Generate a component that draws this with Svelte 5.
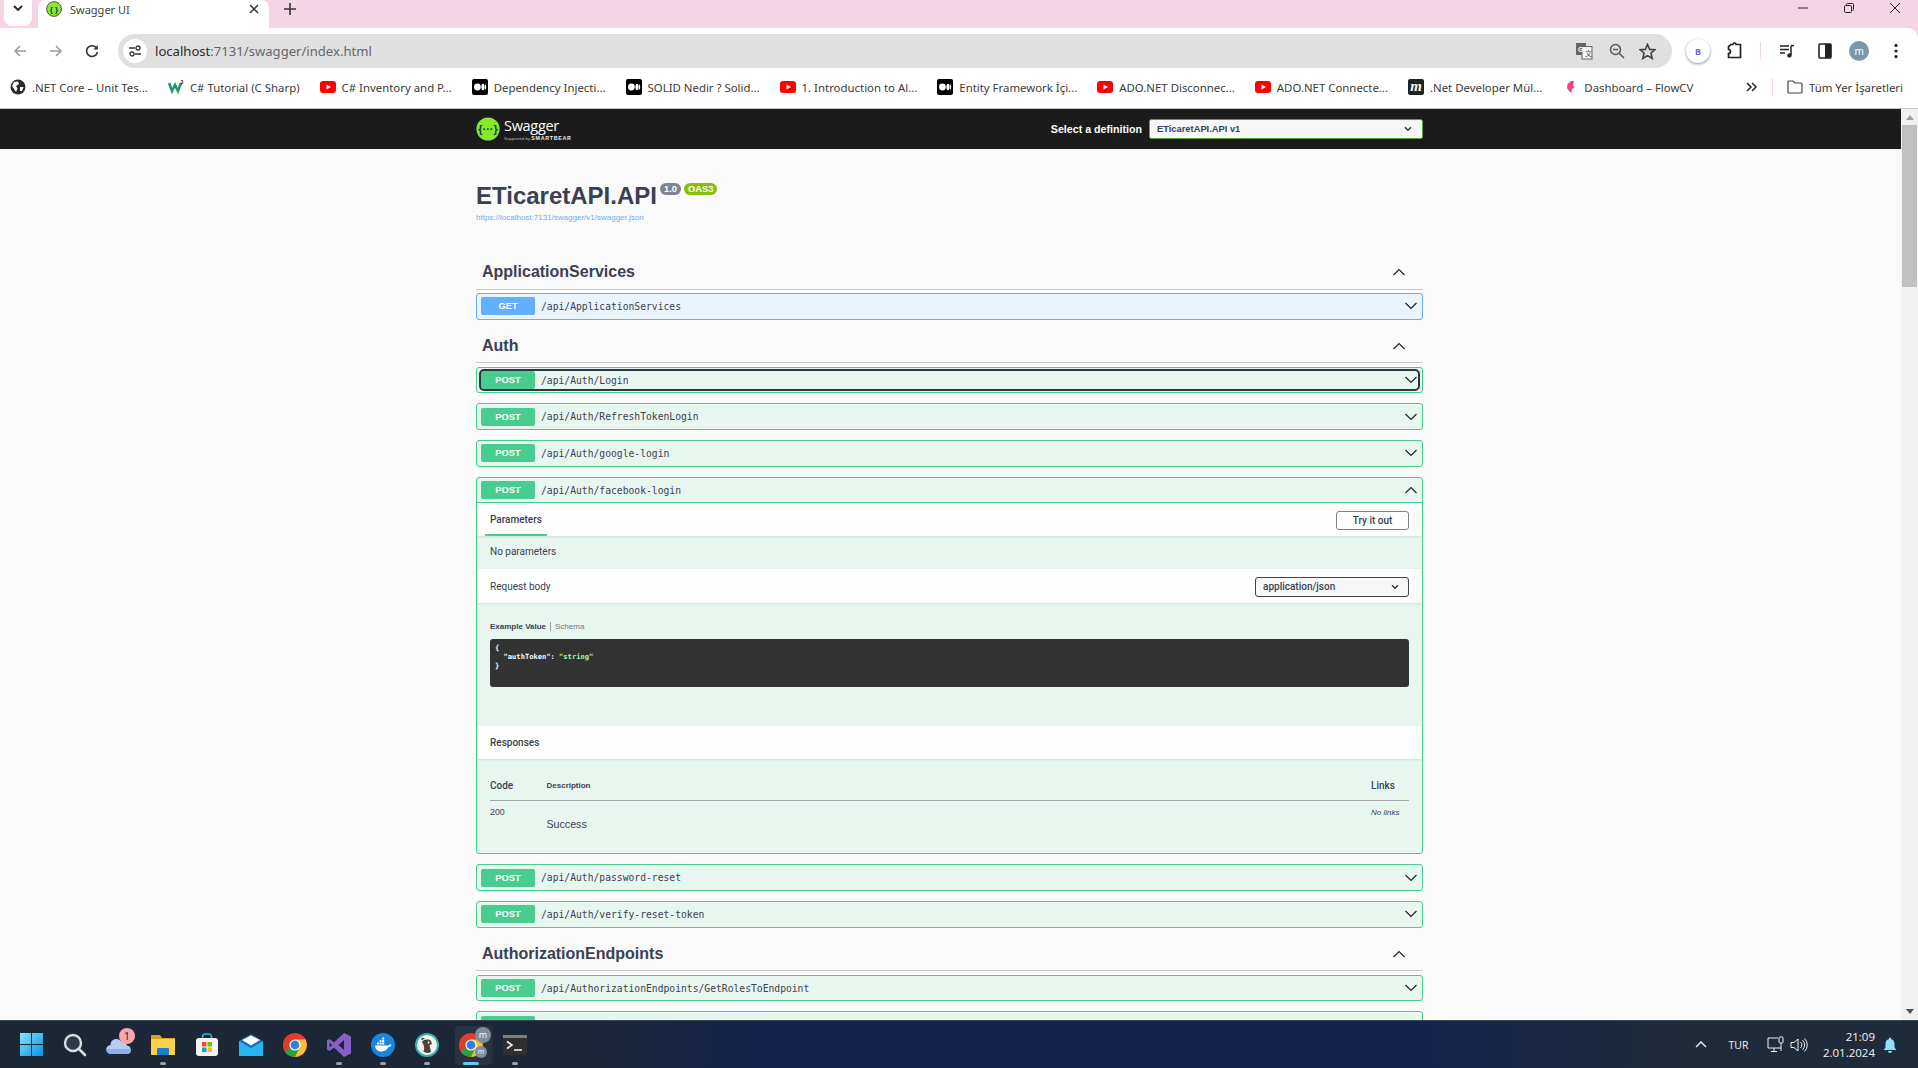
<script>
	const bookmarks = [
		{ icon: 'globe', label: '.NET Core – Unit Tes...' },
		{ icon: 'w3', label: 'C# Tutorial (C Sharp)' },
		{ icon: 'yt', label: 'C# Inventory and P...' },
		{ icon: 'medium', label: 'Dependency Injecti...' },
		{ icon: 'medium', label: 'SOLID Nedir ? Solid...' },
		{ icon: 'yt', label: '1. Introduction to Al...' },
		{ icon: 'medium', label: 'Entity Framework İçi...' },
		{ icon: 'yt', label: 'ADO.NET Disconnec...' },
		{ icon: 'yt', label: 'ADO.NET Connecte...' },
		{ icon: 'm', label: '.Net Developer Mül...' },
		{ icon: 'flow', label: 'Dashboard – FlowCV' }
	];

	const authTop = ['/api/Auth/RefreshTokenLogin', '/api/Auth/google-login'];
	const authBottom = ['/api/Auth/password-reset', '/api/Auth/verify-reset-token'];
</script>

{#snippet chevron(up)}
	<svg class="chev" viewBox="0 0 14 8" width="14" height="8">
		<polyline points={up ? '1.5,7 7,1.5 12.5,7' : '1.5,1 7,6.5 12.5,1'} fill="none" stroke="#222" stroke-width="1.2" />
	</svg>
{/snippet}

{#snippet smallChevron()}
	<svg class="small-chev" viewBox="0 0 8 6" width="8" height="6">
		<polyline points="1,1.2 4,4.2 7,1.2" fill="none" stroke="#333" stroke-width="1.4" />
	</svg>
{/snippet}

{#snippet row(method, path, focused = false)}
	<div class="opblock {method}">
		<div class="summary">
			<div class="control" class:focused>
				<span class="method">{method.toUpperCase()}</span>
				<span class="path">{path}</span>
				{@render chevron(false)}
			</div>
		</div>
	</div>
{/snippet}

{#snippet tag(name)}
	<div class="tag">
		<h3>{name}</h3>
		{@render chevron(true)}
	</div>
{/snippet}

{#snippet chromeLogo(size)}
	<svg viewBox="0 0 24 24" width={size} height={size}>
		<circle cx="12" cy="12" r="12" fill="#e33b2e" />
		<path d="M12 12 L1.6 18 A12 12 0 0 1 3 4 Z" fill="#e33b2e" />
		<path d="M12 12 L1.6 18 A12 12 0 0 0 12 24 L18 13 Z" fill="#2f9e44" />
		<path d="M12 6.5 L22.4 6.5 A12 12 0 0 1 12 24 L17 14 Z" fill="#fbc02d" />
		<circle cx="12" cy="12" r="5.6" fill="#fff" />
		<circle cx="12" cy="12" r="4.4" fill="#2f7fe6" />
	</svg>
{/snippet}

{#snippet favicon(icon)}
	{#if icon === 'globe'}
		<svg viewBox="0 0 16 16" width="16" height="16">
			<circle cx="8" cy="8" r="7.5" fill="#2b2b2b" />
			<path d="M4 3 L8 2.5 L9 5 L6 7 L7.5 9.5 L6 13 L3.5 9 L2 7 Z M10 8 L13.5 8 L12 12 L10 12 Z" fill="#fff" />
		</svg>
	{:else if icon === 'w3'}
		<svg viewBox="0 0 16 16" width="16" height="16">
			<polyline points="1,4 4,12 7,6 10,12 13,4" fill="none" stroke="#1a9c6a" stroke-width="2.6" />
			<text x="12.6" y="5" font-size="5" font-weight="700" font-family="Liberation Sans, sans-serif" fill="#222">3</text>
		</svg>
	{:else if icon === 'yt'}
		<svg viewBox="0 0 16 16" width="16" height="16">
			<rect x="0" y="2" width="16" height="12" rx="3" fill="#f00" />
			<polygon points="6.5,5.5 11,8 6.5,10.5" fill="#fff" />
		</svg>
	{:else if icon === 'medium'}
		<svg viewBox="0 0 16 16" width="16" height="16">
			<rect width="16" height="16" rx="2" fill="#000" />
			<ellipse cx="5.4" cy="8" rx="3.4" ry="3.4" fill="#fff" />
			<ellipse cx="11" cy="8" rx="1.6" ry="3.2" fill="#fff" />
			<ellipse cx="13.6" cy="8" rx=".6" ry="2.8" fill="#fff" />
		</svg>
	{:else if icon === 'm'}
		<span class="m-icon">m</span>
	{:else if icon === 'flow'}
		<svg viewBox="0 0 16 16" width="16" height="16">
			<path d="M9 2 L12 2 L11 6 L12.5 8 L10 10 L9.5 14 L7 12 L5 9 L5.5 5 Z" fill="#f0487c" />
		</svg>
	{/if}
{/snippet}

<div class="page">
	<div class="chrome">
		<div class="tabbar">
			<div class="tab-list">
				<svg viewBox="0 0 10 6" width="10" height="6"><polyline points="1,1 5,5 9,1" fill="none" stroke="#222" stroke-width="1.8" /></svg>
			</div>
			<div class="tab">
				<svg viewBox="0 0 16 16" width="16" height="16">
					<circle cx="8" cy="8" r="7.4" fill="#85ea2d" stroke="#333" stroke-width=".8" />
					<text x="8" y="10.6" text-anchor="middle" font-size="8" font-weight="700" font-family="Liberation Sans, sans-serif" fill="#173646">{'{ }'}</text>
				</svg>
				<span class="tab-title">Swagger UI</span>
				<svg class="tab-close" viewBox="0 0 10 10" width="10" height="10"><path d="M1 1 L9 9 M9 1 L1 9" stroke="#333" stroke-width="1.5" /></svg>
			</div>
			<svg class="new-tab" viewBox="0 0 12 12" width="12" height="12"><path d="M6 0 V12 M0 6 H12" stroke="#333" stroke-width="1.6" /></svg>
			<div class="window-controls">
				<svg viewBox="0 0 10 10" width="10" height="10"><path d="M0 5 H10" stroke="#222" /></svg>
				<svg viewBox="0 0 10 10" width="10" height="10"><rect x=".5" y="2.5" width="7" height="7" rx="1.2" fill="none" stroke="#222" /><path d="M2.5 2 V1.5 A1 1 0 0 1 3.5 .5 H8.5 A1 1 0 0 1 9.5 1.5 V6.5 A1 1 0 0 1 8.5 7.5" fill="none" stroke="#222" /></svg>
				<svg viewBox="0 0 10 10" width="10" height="10"><path d="M0 0 L10 10 M10 0 L0 10" stroke="#222" /></svg>
			</div>
		</div>

		<div class="toolbar">
			<div class="nav">
				<svg viewBox="0 0 14 14" width="14" height="14"><path d="M13 7 H2 M7 2 L2 7 L7 12" fill="none" stroke="#9a9a9a" stroke-width="1.5" /></svg>
				<svg viewBox="0 0 14 14" width="14" height="14"><path d="M1 7 H12 M7 2 L12 7 L7 12" fill="none" stroke="#9a9a9a" stroke-width="1.5" /></svg>
				<svg viewBox="0 0 14 14" width="14" height="14"><path d="M11.6 4.2 A5.4 5.4 0 1 0 12.4 7.8" fill="none" stroke="#333" stroke-width="1.6" /><polygon points="12.8,1 12.8,5.4 8.4,5.4" fill="#333" /></svg>
			</div>
			<div class="omnibox">
				<span class="site-info">
					<svg viewBox="0 0 14 14" width="14" height="14">
						<path d="M1 4 H7 M7 10 H13" stroke="#333" stroke-width="1.4" />
						<circle cx="10" cy="4" r="2" fill="none" stroke="#333" stroke-width="1.3" />
						<circle cx="4" cy="10" r="2" fill="none" stroke="#333" stroke-width="1.3" />
					</svg>
				</span>
				<span class="url"><b>localhost</b>:7131/swagger/index.html</span>
				<div class="omni-actions">
					<svg viewBox="0 0 18 18" width="18" height="18">
						<rect x="1" y="1" width="10" height="12" fill="#666" />
						<rect x="7" y="4.5" width="10" height="12.5" fill="#f4f4f4" stroke="#666" />
						<text x="3" y="10" font-size="7" font-weight="700" font-family="Liberation Sans, sans-serif" fill="#fff">G</text>
						<text x="10" y="14" font-size="7" font-family="Noto Sans CJK SC, sans-serif" fill="#555">文</text>
					</svg>
					<svg viewBox="0 0 16 16" width="16" height="16"><circle cx="6.5" cy="6.5" r="5" fill="none" stroke="#555" stroke-width="1.5" /><path d="M10.2 10.2 L15 15 M4 6.5 H9" stroke="#555" stroke-width="1.5" /></svg>
					<svg viewBox="0 0 16 16" width="17" height="17"><polygon points="8,1.2 10,6 15,6.3 11.2,9.6 12.5,14.6 8,11.9 3.5,14.6 4.8,9.6 1,6.3 6,6" fill="none" stroke="#444" stroke-width="1.5" /></svg>
				</div>
			</div>
			<div class="ext-icons">
				<span class="bing">B</span>
				<svg viewBox="0 0 18 18" width="18" height="18"><path d="M6 2.5 H8 A1.5 1.5 0 0 1 11 2.5 H15.5 V15.5 H3.5 V11.5 A2 2 0 0 0 3.5 7.5 V4.5 Z" fill="none" stroke="#222" stroke-width="1.7" /></svg>
				<i class="tool-sep"></i>
				<svg viewBox="0 0 16 16" width="16" height="16"><path d="M1 3 H10 M1 6.5 H10 M1 10 H6" stroke="#222" stroke-width="1.5" /><path d="M12 3 V12" stroke="#222" stroke-width="1.5" /><circle cx="10.4" cy="12.4" r="2.2" fill="#222" /><path d="M12 2.6 H15" stroke="#222" stroke-width="1.5" /></svg>
				<svg viewBox="0 0 14 16" width="14" height="16"><rect x="1" y="1" width="12" height="14" rx="1" fill="#fff" stroke="#222" stroke-width="1.6" /><rect x="7" y="1" width="6" height="14" fill="#222" /></svg>
				<span class="avatar">m</span>
				<svg viewBox="0 0 4 16" width="4" height="16"><circle cx="2" cy="2.4" r="1.6" fill="#222" /><circle cx="2" cy="8" r="1.6" fill="#222" /><circle cx="2" cy="13.6" r="1.6" fill="#222" /></svg>
			</div>
		</div>

		<div class="bookmarks">
			{#each bookmarks as b}
				<div class="bookmark">
					{@render favicon(b.icon)}
					<span>{b.label}</span>
				</div>
			{/each}
			<div class="bookmark-end">
				<svg viewBox="0 0 12 10" width="12" height="10"><path d="M1 1 L5 5 L1 9 M6 1 L10 5 L6 9" fill="none" stroke="#222" stroke-width="1.5" /></svg>
				<i class="tool-sep"></i>
				<svg viewBox="0 0 16 14" width="16" height="14"><path d="M1 2 A1 1 0 0 1 2 1 H6 L8 3 H14 A1 1 0 0 1 15 4 V12 A1 1 0 0 1 14 13 H2 A1 1 0 0 1 1 12 Z" fill="none" stroke="#444" stroke-width="1.2" /></svg>
				<span>Tüm Yer İşaretleri</span>
			</div>
		</div>
	</div>

	<div class="viewport">
		<main>
			<header class="topbar">
				<div class="wrapper topbar-inner">
					<div class="logo">
						<svg viewBox="0 0 24 24" width="24" height="24">
							<circle cx="12" cy="12" r="11.6" fill="#85ea2d" />
							<text x="12" y="15.6" text-anchor="middle" font-size="11" font-weight="700" font-family="Liberation Sans, sans-serif" fill="#173646">{'{···}'}</text>
						</svg>
						<div class="logo-text">
							<span class="logo-name">Swagger</span>
							<span class="logo-sub">Supported by <b>SMARTBEAR</b></span>
						</div>
					</div>
					<div class="definition">
						<span>Select a definition</span>
						<div class="definition-select">ETicaretAPI.API v1 {@render smallChevron()}</div>
					</div>
				</div>
			</header>

			<div class="wrapper">
				<section class="info">
					<h2>ETicaretAPI.API<span class="badge version">1.0</span><span class="badge oas">OAS3</span></h2>
					<span class="spec-link">https://localhost:7131/swagger/v1/swagger.json</span>
				</section>

				{@render tag('ApplicationServices')}
				{@render row('get', '/api/ApplicationServices')}

				{@render tag('Auth')}
				{@render row('post', '/api/Auth/Login', true)}
				{#each authTop as path}
					{@render row('post', path)}
				{/each}

				<div class="opblock post open">
					<div class="summary divider">
						<div class="control">
							<span class="method">POST</span>
							<span class="path">/api/Auth/facebook-login</span>
							{@render chevron(true)}
						</div>
					</div>

					<div class="bar params-bar">
						<span class="tab-params">Parameters</span>
						<span class="try-out">Try it out</span>
					</div>
					<p class="no-params">No parameters</p>
					<div class="bar body-bar">
						<span>Request body</span>
						<div class="media-select">application/json {@render smallChevron()}</div>
					</div>
					<div class="example">
						<div class="example-tabs"><b>Example Value</b><i></i><span>Schema</span></div>
						<pre class="code">{'{'}
  <b>"authToken"</b>: <em>"string"</em>
{'}'}</pre>
					</div>
					<div class="bar responses-bar">Responses</div>
					<div class="responses">
						<div class="resp-head">
							<span class="col-code">Code</span>
							<span class="col-desc">Description</span>
							<span class="col-links">Links</span>
						</div>
						<div class="resp-row">
							<span class="col-code">200</span>
							<span class="col-desc success">Success</span>
							<span class="col-links nolinks">No links</span>
						</div>
					</div>
				</div>

				{#each authBottom as path}
					{@render row('post', path)}
				{/each}

				{@render tag('AuthorizationEndpoints')}
				{@render row('post', '/api/AuthorizationEndpoints/GetRolesToEndpoint')}

				<!-- next block, only its top edge is above the taskbar -->
				<div class="opblock post">
					<div class="summary">
						<div class="control"><span class="method"></span></div>
					</div>
				</div>
			</div>
		</main>

		<aside class="scrollbar">
			<svg viewBox="0 0 8 5" width="8" height="5"><polygon points="4,0 8,5 0,5" fill="#a0a0a0" /></svg>
			<div class="thumb"></div>
			<svg class="scroll-down" viewBox="0 0 8 5" width="8" height="5"><polygon points="0,0 8,0 4,5" fill="#505050" /></svg>
		</aside>
	</div>

	<footer class="taskbar">
		<div class="task-item">
			<svg viewBox="0 0 23 23" width="23" height="23">
				<defs>
					<linearGradient id="win" x1="0" y1="0" x2="1" y2="1"><stop offset="0" stop-color="#7fe6ff" /><stop offset="1" stop-color="#0f8fe0" /></linearGradient>
				</defs>
				<path d="M0 0 H11 V11 H0 Z M12 0 H23 V11 H12 Z M0 12 H11 V23 H0 Z M12 12 H23 V23 H12 Z" fill="url(#win)" />
			</svg>
		</div>
		<div class="task-item">
			<svg viewBox="0 0 24 24" width="24" height="24"><circle cx="10" cy="10" r="8" fill="#2c3b4a" stroke="#d8dde2" stroke-width="2.4" /><path d="M16 16 L22 22" stroke="#d8dde2" stroke-width="2.6" stroke-linecap="round" /></svg>
		</div>
		<div class="task-item">
			<svg viewBox="0 0 26 24" width="26" height="24">
				<path d="M5 21 A4.5 4.5 0 0 1 4.5 12 A6 6 0 0 1 15 8 A5.5 5.5 0 0 1 21 12.5 A4.3 4.3 0 0 1 21 21 Z" fill="#b6cdf0" />
				<path d="M1 16 H25 V17 A4 4 0 0 1 21 21 H5 A4 4 0 0 1 1 17 Z" fill="#8db2ea" />
			</svg>
			<span class="notif">1</span>
		</div>
		<div class="task-item dot">
			<svg viewBox="0 0 24 24" width="24" height="24">
				<path d="M0 3 A1 1 0 0 1 1 2 H9 L11 5 H24 V22 H0 Z" fill="#d9a21a" />
				<rect y="6" width="24" height="16" rx="1" fill="#fbd04a" />
				<rect x="6" y="15" width="12" height="7" rx="1" fill="#1a7fd0" />
			</svg>
		</div>
		<div class="task-item">
			<svg viewBox="0 0 24 24" width="24" height="24">
				<path d="M7.5 6 V4 A3 3 0 0 1 10.5 1 H13.5 A3 3 0 0 1 16.5 4 V6" fill="none" stroke="#35b4e8" stroke-width="1.6" />
				<rect x="1" y="5" width="22" height="18" rx="3" fill="#f4f4f4" />
				<rect x="7" y="9" width="4.5" height="4.5" fill="#f25022" /><rect x="12.5" y="9" width="4.5" height="4.5" fill="#7fba00" />
				<rect x="7" y="14.5" width="4.5" height="4.5" fill="#00a4ef" /><rect x="12.5" y="14.5" width="4.5" height="4.5" fill="#ffb900" />
			</svg>
		</div>
		<div class="task-item">
			<svg viewBox="0 0 24 24" width="24" height="24">
				<polygon points="0,8 12,1 24,8 24,23 0,23" fill="#0e6fc0" />
				<polygon points="0,8 12,15 24,8 24,23 0,23" fill="#28b5ee" />
				<polygon points="3,7 12,2.6 21,7 12,12.5" fill="#fff" />
			</svg>
		</div>
		<div class="task-item">{@render chromeLogo(24)}</div>
		<div class="task-item dot">
			<svg viewBox="0 0 24 24" width="24" height="24">
				<path d="M17 0 L24 3.5 V20.5 L17 24 L7 14.5 L2.5 18 L0 16.5 V7.5 L2.5 6 L7 9.5 Z M17 7 L11.5 12 L17 17 Z M2.6 9.6 V14.4 L5 12 Z" fill="#8661c5" fill-rule="evenodd" />
			</svg>
		</div>
		<div class="task-item dot">
			<svg viewBox="0 0 24 24" width="24" height="24">
				<circle cx="12" cy="12" r="12" fill="#1a86e0" />
				<path d="M4 12.5 H17.5 C18 11.5 19.5 11 20.5 11.8 C20 13.5 18.8 14 17.6 14 C16 17 13 18.5 10 18.5 C6.5 18.5 4.4 16 4 12.5 Z" fill="#fff" />
				<path d="M6 9.5 H8 V11.5 H6 Z M8.6 9.5 H10.6 V11.5 H8.6 Z M11.2 9.5 H13.2 V11.5 H11.2 Z M8.6 7 H10.6 V9 H8.6 Z M11.2 7 H13.2 V9 H11.2 Z M11.2 4.6 H13.2 V6.6 H11.2 Z" fill="#fff" />
			</svg>
		</div>
		<div class="task-item dot">
			<svg viewBox="0 0 24 24" width="24" height="24">
				<circle cx="12" cy="12" r="11" fill="#f2f2ee" stroke="#35b0ae" stroke-width="2" />
				<path d="M7 9 C9 6 14 6 16 8 L17 11 L14.5 12 L16 19 C13 20.5 10 20 8.5 18.5 C10 15 9 12 7 9 Z" fill="#4a423b" />
				<path d="M10 6 C8 3.5 6 5 6 7 Z" fill="#4a423b" />
				<circle cx="13.5" cy="9.5" r="1" fill="#fff" />
			</svg>
		</div>
		<div class="task-item active">
			{@render chromeLogo(24)}
			<span class="badge-m big">m</span>
			<span class="badge-m small">m</span>
		</div>
		<div class="task-item dot">
			<svg viewBox="0 0 24 20" width="24" height="20">
				<rect width="24" height="20" rx="1.5" fill="#2f2f2f" />
				<rect width="24" height="3" fill="#7d7d7d" />
				<path d="M4 6.5 L9 10 L4 13.5" fill="none" stroke="#eee" stroke-width="1.6" />
				<path d="M11 15 H19" stroke="#eee" stroke-width="1.6" />
			</svg>
		</div>

		<div class="tray">
			<svg viewBox="0 0 12 7" width="12" height="7"><polyline points="1,6 6,1 11,6" fill="none" stroke="#f2f2f2" stroke-width="1.4" /></svg>
			<span class="lang">TUR</span>
			<svg viewBox="0 0 18 18" width="18" height="18"><path d="M11 2 H1 V12 H14 M4 15.5 H10 M7 12 V15.5 M14 7 V15" fill="none" stroke="#f2f2f2" stroke-width="1" /><rect x="12" y="1" width="4" height="6" rx="1" fill="none" stroke="#f2f2f2" /></svg>
			<svg viewBox="0 0 18 16" width="18" height="16"><path d="M1 5.5 H4 L8 2 V14 L4 10.5 H1 Z M10.5 5 A4 4 0 0 1 10.5 11 M12.5 3.2 A6.5 6.5 0 0 1 12.5 12.8 M14.5 1.5 A9 9 0 0 1 14.5 14.5" fill="none" stroke="#f2f2f2" /></svg>
			<div class="clock"><span>21:09</span><span>2.01.2024</span></div>
			<svg viewBox="0 0 14 16" width="14" height="16"><path d="M7 0.5 A1 1 0 0 1 8 2 C10.5 2.5 11.5 4.5 11.5 7 V10.5 L13.5 13 H0.5 L2.5 10.5 V7 C2.5 4.5 3.5 2.5 6 2 A1 1 0 0 1 7 0.5 Z M5 14 H9 A2 2 0 0 1 5 14 Z" fill="#8fe0ff" /></svg>
		</div>
	</footer>
</div>

<style>
	:global(body) {
		margin: 0;
		background: #fafafa;
	}

	.page {
		width: 1918px;
		height: 1068px;
		display: flex;
		flex-direction: column;
		overflow: hidden;
		font-family: 'Liberation Sans', Arial, sans-serif;
	}

	/* browser chrome */
	.chrome {
		background: #f5d5e5;
		flex: none;
		font-family: 'Noto Sans', 'Open Sans', sans-serif;
		color: #333;
	}

	.tabbar {
		height: 28px;
		display: flex;
		align-items: center;
		padding-left: 4px;
	}

	.tab-list {
		width: 28px;
		height: 26px;
		box-sizing: border-box;
		padding-top: 5px;
		align-self: flex-start;
		background: #fff;
		border-radius: 0 0 8px 8px;
		display: flex;
		align-items: flex-start;
		justify-content: center;
	}

	.tab {
		width: 231px;
		height: 28px;
		margin-left: 6px;
		box-sizing: border-box;
		padding: 0 10px 10px 8px;
		background: #fff;
		border-radius: 8px 8px 0 0;
		display: flex;
		align-items: center;
		gap: 8px;
	}

	.tab-title {
		font-size: 11px;
		color: #444;
	}

	.tab-close {
		margin-left: auto;
	}

	.new-tab {
		margin: 0 0 10px 15px;
	}

	.window-controls {
		margin-left: auto;
		display: flex;
		gap: 36px;
		padding: 0 18px 12px 0;
	}

	.toolbar {
		height: 40px;
		background: #fff;
		border-radius: 0 10px 0 0;
		display: flex;
		align-items: flex-end;
	}

	.nav {
		display: flex;
		gap: 22px;
		width: 118px;
		box-sizing: border-box;
		padding: 0 0 10px 13px;
	}

	.omnibox {
		width: 1554px;
		height: 34px;
		background: #e0e0e0;
		border-radius: 17px;
		display: flex;
		align-items: center;
		padding-left: 5px;
		box-sizing: border-box;
	}

	.site-info {
		width: 24px;
		height: 24px;
		background: #fff;
		border-radius: 50%;
		display: flex;
		align-items: center;
		justify-content: center;
	}

	.url {
		margin-left: 8px;
		font-size: 13.1px;
		color: #666;
	}

	.url b {
		font-weight: 400;
		color: #2a2a2a;
	}

	.omni-actions {
		margin-left: auto;
		display: flex;
		align-items: center;
		gap: 14px;
		padding-right: 16px;
	}

	.omni-actions svg:first-child {
		margin-right: 2px;
	}

	.ext-icons {
		flex: 1;
		height: 34px;
		display: flex;
		align-items: center;
		padding-left: 14px;
		gap: 0;
	}

	.bing {
		width: 24px;
		height: 24px;
		border-radius: 50%;
		background: #fff;
		box-shadow: 0 1px 3px rgba(0, 0, 0, 0.45);
		color: #6a6ad8;
		font-size: 9px;
		font-weight: 700;
		display: flex;
		align-items: center;
		justify-content: center;
		margin-right: 15px;
	}

	.tool-sep {
		width: 1px;
		height: 18px;
		background: #f5d5e5;
		margin: 0 18px 0 17px;
	}

	.ext-icons svg:nth-of-type(2) {
		margin-right: 18px;
	}

	.ext-icons svg:nth-of-type(3) {
		margin: 0 17.5px 0 4.6px;
	}

	.avatar {
		width: 20px;
		height: 20px;
		border-radius: 50%;
		background: #7b97a8;
		color: #fff;
		font-size: 10px;
		display: flex;
		align-items: center;
		justify-content: center;
		margin-right: 25px;
	}

	.bookmarks {
		height: 41px;
		box-sizing: border-box;
		padding-bottom: 2px;
		background: #fff;
		border-bottom: 1px solid #c8c8c8;
		display: flex;
		align-items: center;
		padding-left: 10px;
		gap: 20px;
		font-size: 11.4px;
		color: #3a3a3a;
		white-space: nowrap;
	}

	.bookmark {
		display: flex;
		align-items: center;
		gap: 6px;
	}

	.m-icon {
		width: 16px;
		height: 16px;
		background: #222;
		border-radius: 2px;
		color: #fff;
		font: italic 700 15px/14px 'Liberation Serif', serif;
		text-align: center;
	}

	.bookmark-end {
		margin-left: auto;
		padding-right: 15px;
		display: flex;
		align-items: center;
		gap: 6px;
	}

	.bookmark-end .tool-sep {
		margin: 0 8px 0 8px;
	}

	/* swagger page */
	.viewport {
		flex: 1;
		min-height: 0;
		display: flex;
	}

	main {
		flex: 1;
		min-width: 0;
		background: #fafafa;
		overflow: hidden;
		color: #3b4151;
	}

	.scrollbar {
		width: 17px;
		flex: none;
		background: #f1f1f1;
		display: flex;
		flex-direction: column;
		align-items: center;
		padding-top: 6px;
		box-sizing: border-box;
	}

	.thumb {
		width: 15px;
		height: 162px;
		margin-top: 5px;
		background: #c1c1c1;
	}

	.scroll-down {
		margin-top: auto;
		margin-bottom: 6px;
	}

	.wrapper {
		width: 947px;
		margin-left: 476px;
	}

	.topbar {
		height: 40px;
		background: #1b1b1b;
	}

	.topbar-inner {
		height: 100%;
		display: flex;
		align-items: center;
		justify-content: space-between;
	}

	.logo {
		display: flex;
		align-items: center;
		gap: 4px;
	}

	.logo-text {
		display: flex;
		flex-direction: column;
		color: #fff;
	}

	.logo-name {
		font-family: 'Open Sans', sans-serif;
		font-size: 14.5px;
		line-height: 19px;
		letter-spacing: -0.3px;
	}

	.logo-sub {
		font-size: 4.4px;
		line-height: 6px;
		color: #bbb;
		white-space: nowrap;
	}

	.logo-sub b {
		font-size: 5.3px;
		letter-spacing: 0.7px;
		color: #eee;
	}

	.definition {
		display: flex;
		align-items: center;
		gap: 7px;
		font-size: 10.67px;
		font-weight: 700;
		color: #fff;
	}

	.definition-select {
		width: 274px;
		height: 20px;
		box-sizing: border-box;
		padding: 0 10px 0 7px;
		background: #f7f7f7;
		border: 1px solid #62a03f;
		border-radius: 2.5px;
		display: flex;
		align-items: center;
		justify-content: space-between;
		color: #3b4151;
		font-size: 9.33px;
	}

	.info {
		height: 107px;
		padding-top: 32px;
		box-sizing: border-box;
	}

	.info h2 {
		margin: 0;
		font-size: 24px;
		line-height: 30px;
		font-weight: 700;
		color: #3b4151;
		display: flex;
		align-items: flex-start;
	}

	.badge {
		height: 12px;
		margin: 2px 0 0 3px;
		padding: 0 4px;
		border-radius: 7px;
		color: #fff;
		font-size: 9.33px;
		line-height: 12px;
	}

	.version {
		background: #7d8492;
	}

	.oas {
		background: #89bf04;
	}

	.spec-link {
		display: block;
		margin-top: 1px;
		font-size: 8px;
		line-height: 11px;
		color: #4990e2;
		opacity: 0.75;
	}

	.tag {
		height: 33.6px;
		box-sizing: border-box;
		margin-bottom: 3.4px;
		padding: 0 17px 0 6px;
		border-bottom: 1.3px solid #c6c8cc;
		display: flex;
		align-items: center;
		justify-content: space-between;
	}

	.tag h3 {
		margin: 0;
		font-size: 16px;
		font-weight: 700;
		color: #3b4151;
	}

	.opblock {
		box-sizing: border-box;
		margin-bottom: 10px;
		border: 1px solid;
		border-radius: 3px;
	}

	.opblock.get {
		border-color: #61affe;
		background: #ebf3fb;
	}

	.opblock.post {
		border-color: #49cc90;
		background: #e8f6f0;
	}

	.summary {
		padding: 3.33px 4px;
	}

	.summary.divider {
		border-bottom: 1px solid #49cc90;
		height: 25.67px;
		box-sizing: border-box;
		padding-top: 3.4px;
	}

	.control {
		height: 18px;
		display: flex;
		align-items: center;
		border-radius: 3px;
	}

	.control.focused {
		outline: 2px solid #2d3644;
	}

	.method {
		width: 54px;
		height: 18px;
		flex: none;
		border-radius: 2px;
		color: #fff;
		font-size: 9.33px;
		font-weight: 700;
		line-height: 18px;
		text-align: center;
	}

	.get .method {
		background: #61affe;
	}

	.post .method {
		background: #49cc90;
	}

	.path {
		margin: 0.5px 0 0 6px;
		font-family: 'DejaVu Sans Mono', 'Liberation Mono', monospace;
		font-size: 9.7px;
		color: #3b4151;
	}

	.chev {
		margin-left: auto;
		flex: none;
	}

	.bar {
		background: #fdfefd;
		box-shadow: 0 1px 2px rgba(0, 0, 0, 0.1);
		display: flex;
		align-items: center;
		justify-content: space-between;
		padding: 0 13px 0 13px;
		font-family: Roboto, 'Liberation Sans', sans-serif;
		font-size: 10px;
		color: #3b4151;
	}

	.params-bar {
		height: 33px;
	}

	.tab-params {
		font-weight: 500;
		line-height: 32px;
		height: 32px;
		padding: 0 5px;
		margin-left: -5px;
		box-sizing: border-box;
		border-bottom: 2px solid #49cc90;
	}

	.try-out {
		width: 73px;
		height: 19px;
		margin-top: 1px;
		box-sizing: border-box;
		border: 1px solid #808080;
		border-radius: 3px;
		text-align: center;
		line-height: 17px;
		font-weight: 500;
	}

	.no-params {
		margin: 0;
		height: 33px;
		padding-left: 13px;
		font-family: Roboto, 'Liberation Sans', sans-serif;
		font-size: 10px;
		line-height: 32px;
	}

	.body-bar {
		height: 34px;
		padding-top: 1px;
		box-sizing: border-box;
	}

	.media-select {
		width: 154px;
		height: 20px;
		box-sizing: border-box;
		padding: 0 9px 0 7px;
		background: #f7f7f7;
		border: 1.3px solid #41444e;
		border-radius: 3px;
		display: flex;
		align-items: center;
		justify-content: space-between;
		font-weight: 500;
	}

	.example {
		height: 123px;
		padding: 11px 13px 0 13px;
		box-sizing: border-box;
	}

	.example-tabs {
		height: 24px;
		margin-bottom: 1px;
		display: flex;
		align-items: center;
		font-size: 8px;
	}

	.example-tabs i {
		width: 1px;
		height: 9px;
		margin: 0 4px;
		background: #9a9ea8;
	}

	.example-tabs span {
		color: #70747f;
	}

	.code {
		margin: 0;
		height: 48px;
		padding: 3.5px 5px 0;
		box-sizing: border-box;
		background: #333;
		border-radius: 3px;
		font-family: 'DejaVu Sans Mono', monospace;
		font-size: 7.1px;
		font-weight: 700;
		line-height: 9px;
		color: #fff;
	}

	.code b {
		font-weight: 700;
	}

	.code em {
		font-style: normal;
		color: #a2fca2;
	}

	.responses-bar {
		height: 33px;
		font-weight: 500;
	}

	.responses {
		height: 94px;
		padding: 20px 13px 0 13px;
		box-sizing: border-box;
		font-size: 10px;
		font-family: Roboto, 'Liberation Sans', sans-serif;
	}

	.resp-head {
		height: 20.5px;
		display: flex;
		border-bottom: 1px solid #a5a9ae;
		line-height: 13px;
		font-weight: 500;
	}

	.resp-row {
		display: flex;
		padding-top: 6px;
		line-height: 11px;
		font-family: 'Liberation Sans', sans-serif;
	}

	.col-code {
		width: 56.5px;
		flex: none;
	}

	.resp-row .col-code {
		font-size: 8.8px;
	}

	.col-desc {
		flex: 1;
	}

	.resp-head .col-desc {
		font-family: 'Liberation Sans', sans-serif;
		font-size: 8px;
		font-weight: 700;
	}

	.col-links {
		width: 38px;
		flex: none;
	}

	.success {
		font-size: 10.67px;
		padding-top: 12px;
		font-weight: 400;
	}

	.nolinks {
		font-size: 8px;
		font-style: italic;
	}

	/* windows taskbar */
	.taskbar {
		height: 48px;
		flex: none;
		box-sizing: border-box;
		border-top: 1px solid #3b4450;
		background: linear-gradient(90deg, #1c2736 0, #1b2738 30%, #12244f 42%, #12244f 72%, #1e2b3a 88%, #1e2b3a 100%);
		display: flex;
		align-items: center;
		padding-left: 9px;
		font-family: 'Open Sans', 'Noto Sans', sans-serif;
		color: #f2f2f2;
	}

	.task-item {
		width: 44px;
		height: 40px;
		flex: none;
		position: relative;
		display: flex;
		align-items: center;
		justify-content: center;
	}

	.task-item.dot::after {
		content: '';
		position: absolute;
		left: 19px;
		bottom: 0;
		width: 6px;
		height: 3px;
		border-radius: 2px;
		background: #9aa2aa;
	}

	.task-item.active::before {
		content: '';
		position: absolute;
		left: 6px;
		top: 1px;
		width: 36px;
		height: 39px;
		border-radius: 4px;
		background: rgba(255, 255, 255, 0.06);
		box-shadow: 2px 0 0 rgba(255, 255, 255, 0.04);
	}

	.task-item.active::after {
		content: '';
		position: absolute;
		left: 14px;
		bottom: 0;
		width: 16px;
		height: 3px;
		border-radius: 2px;
		background: #62c8f5;
	}

	.task-item.active svg {
		position: relative;
	}

	.notif {
		position: absolute;
		left: 22px;
		top: 3px;
		width: 16px;
		height: 16px;
		border-radius: 50%;
		background: #f8a5b0;
		color: #222;
		font-size: 11px;
		line-height: 16px;
		text-align: center;
	}

	.badge-m {
		position: absolute;
		border-radius: 50%;
		background: #7b8f9c;
		color: #fff;
		text-align: center;
	}

	.badge-m.big {
		left: 26px;
		top: 2px;
		width: 16px;
		height: 16px;
		font-size: 9px;
		line-height: 15px;
	}

	.badge-m.small {
		left: 26px;
		top: 21px;
		width: 12px;
		height: 12px;
		font-size: 7px;
		line-height: 11px;
	}

	.tray {
		margin-left: auto;
		display: flex;
		align-items: center;
		padding-right: 21px;
	}

	.lang {
		font-size: 10.5px;
		margin: 0 19px 0 22px;
	}

	.tray svg:nth-of-type(2) {
		margin-right: 5px;
	}

	.clock {
		display: flex;
		flex-direction: column;
		align-items: flex-end;
		margin: 0 8px 0 14.5px;
		font-size: 11.5px;
		line-height: 16px;
	}
</style>
